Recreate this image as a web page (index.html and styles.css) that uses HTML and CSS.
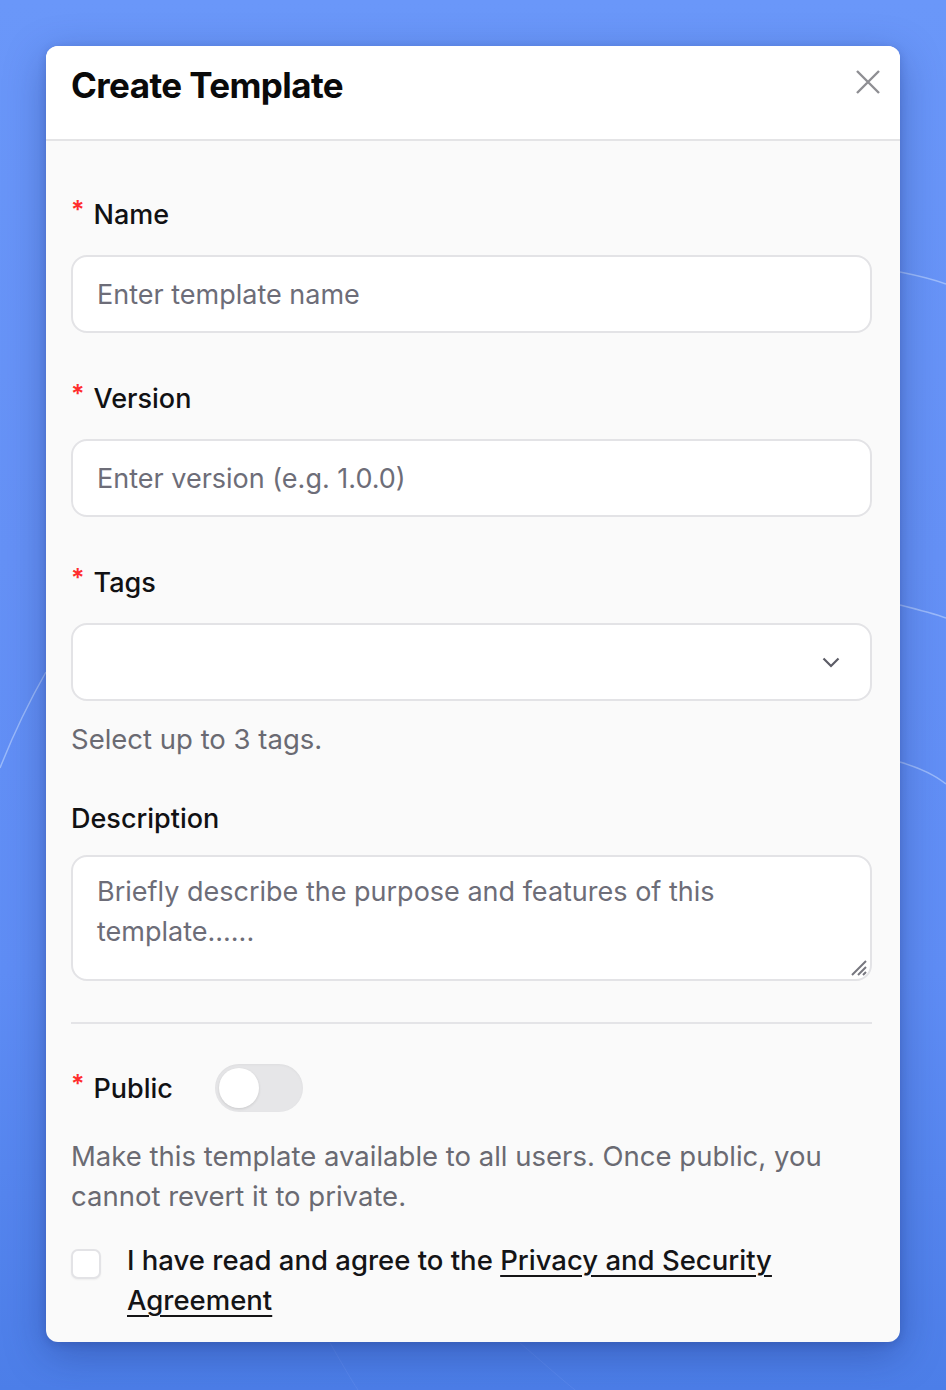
FILE: index.html
```html
<!DOCTYPE html>
<html lang="en">
<head>
<meta charset="utf-8">
<title>Create Template</title>
<link rel="stylesheet" href="styles.css">
</head>
<body>
<svg class="bg-lines" width="946" height="1390" viewBox="0 0 946 1390" aria-hidden="true">
  <path d="M0 768 C 15 730, 30 700, 46 672" />
  <path d="M900 272 C 920 276, 935 280, 946 284" />
  <path d="M900 605 C 920 610, 935 614, 946 618" />
  <path d="M900 762 C 920 768, 935 775, 946 784" />
  <path class="faint" d="M330 1343 C 340 1360, 350 1378, 358 1390" />
  <path class="faint" d="M520 1343 C 540 1360, 560 1378, 575 1390" />
</svg>
<div class="modal">
  <div class="modal-header">
    <h1 class="modal-title">Create Template</h1>
    <button class="close" aria-label="Close">
      <svg width="24" height="24" viewBox="0 0 24 24"><path d="M1 1 L23 23 M23 1 L1 23" /></svg>
    </button>
  </div>
  <div class="modal-body">
    <div class="item">
      <label class="label"><span class="req">*</span>Name</label>
      <div class="input"><span class="ph">Enter template name</span></div>
    </div>
    <div class="item">
      <label class="label"><span class="req">*</span>Version</label>
      <div class="input"><span class="ph">Enter version (e.g. 1.0.0)</span></div>
    </div>
    <div class="item item-tags">
      <label class="label"><span class="req">*</span>Tags</label>
      <div class="input select">
        <span class="ph"></span>
        <svg class="chev" width="18" height="11" viewBox="0 0 18 11"><path d="M1.5 1.5 L9 9 L16.5 1.5" /></svg>
      </div>
      <div class="help">Select up to 3 tags.</div>
    </div>
    <div class="item item-desc">
      <label class="label">Description</label>
      <div class="textarea">
        <div class="ph ph-block">Briefly describe the purpose and features of this template......</div>
        <svg class="grip" width="22" height="22" viewBox="0 0 22 22"><path d="M20 6 L6 20 M20 12 L12 20 M20 17 L17 20" /></svg>
      </div>
    </div>
    <div class="divider"></div>
    <div class="public-row">
      <label class="label"><span class="req">*</span>Public</label>
      <div class="switch"><div class="knob"></div></div>
    </div>
    <div class="help help-public">Make this template available to all users. Once public, you cannot revert it to private.</div>
    <div class="agree">
      <span class="checkbox"></span>
      <span class="agree-text">I have read and agree to the <a href="#">Privacy and Security Agreement</a></span>
    </div>
  </div>
</div>
</body>
</html>
```

FILE: styles.css
```css
* { box-sizing: border-box; }
html, body { margin: 0; padding: 0; }
body {
  width: 946px;
  height: 1390px;
  overflow: hidden;
  position: relative;
  font-family: "Inter", "Liberation Sans", sans-serif;
  background: linear-gradient(180deg, #6a97f9 0%, #6591f6 40%, #5f8df5 70%, #4c7ee8 100%);
  padding: 46px 46px 0 46px;
}
.bg-lines {
  position: absolute;
  left: 0;
  top: 0;
  pointer-events: none;
}
.bg-lines path {
  fill: none;
  stroke: rgba(200, 220, 255, 0.55);
  stroke-width: 1.5;
}
.bg-lines path.faint {
  stroke: rgba(110, 150, 240, 0.35);
  stroke-width: 1;
}
.modal {
  position: relative;
  width: 854px;
  background: #fafafa;
  border-radius: 12px;
  overflow: hidden;
  box-shadow: 0 12px 40px rgba(20, 40, 110, 0.35), 0 2px 8px rgba(20, 40, 110, 0.2);
}
.modal-header {
  height: 95px;
  background: #ffffff;
  border-bottom: 2px solid #e4e4e6;
  display: flex;
  align-items: flex-start;
  justify-content: space-between;
  padding: 0 20px 0 25px;
}
.modal-title {
  margin: 19px 0 0 0;
  font-size: 35px;
  line-height: 40px;
  font-weight: 700;
  color: #0a0a0a;
  letter-spacing: -0.6px;
}
.close {
  margin-top: 24px;
  border: 0;
  background: none;
  padding: 0;
  width: 24px;
  height: 24px;
}
.close svg path {
  stroke: #8e8e93;
  stroke-width: 2.4;
  fill: none;
}
.modal-body {
  padding: 51px 28px 22px 25px;
}
.item {
  margin-bottom: 43px;
}
.label {
  display: flex;
  align-items: center;
  height: 44px;
  font-size: 27px;
  font-weight: 500;
  color: #111113;
  margin-bottom: 19px;
}
.req {
  color: #ff2d2d;
  font-size: 25px;
  font-weight: 600;
  margin-right: 9px;
  position: relative;
  top: -4px;
}
.input {
  height: 78px;
  border: 2px solid #e3e3e6;
  background: #ffffff;
  border-radius: 16px;
  display: flex;
  align-items: center;
  padding: 0 24px;
}
.ph {
  font-size: 27px;
  color: #6d6d78;
}
.select {
  justify-content: space-between;
  padding-right: 30px;
}
.chev path {
  fill: none;
  stroke: #5c5c66;
  stroke-width: 2.2;
}
.item-tags { margin-bottom: 37px; }
.help {
  font-size: 27.5px;
  line-height: 40px;
  color: #6a6a72;
  margin-top: 18px;
}
.item-desc .label { margin-bottom: 15px; }
.item-desc { margin-bottom: 41px; }
.textarea {
  position: relative;
  height: 126px;
  border: 2px solid #e3e3e6;
  background: #ffffff;
  border-radius: 16px;
  padding: 15px 60px 0 24px;
  font-size: 27px;
  line-height: 40px;
}
.ph-block {
  display: block;
  line-height: 40px;
}
.grip {
  position: absolute;
  right: 2px;
  bottom: 2px;
}
.grip path {
  stroke: #77777f;
  stroke-width: 2;
  fill: none;
}
.divider {
  height: 2px;
  background: #e4e4e7;
  margin-bottom: 40px;
}
.public-row {
  display: flex;
  align-items: center;
  height: 48px;
}
.public-row .label {
  margin: 0;
  width: 144px;
}
.switch {
  width: 88px;
  height: 48px;
  border-radius: 24px;
  background: #e6e6e8;
  padding: 4px;
  box-shadow: inset 0 1px 3px rgba(0,0,0,0.04);
}
.knob {
  width: 40px;
  height: 40px;
  border-radius: 50%;
  background: #ffffff;
  box-shadow: 0 1px 3px rgba(0,0,0,0.12);
}
.help-public {
  margin-top: 24px;
}
.agree {
  display: flex;
  align-items: flex-start;
  margin-top: 24px;
}
.checkbox {
  flex: none;
  width: 30px;
  height: 30px;
  border: 2px solid #e3e3e6;
  border-radius: 7px;
  background: #ffffff;
  margin-top: 9px;
  margin-right: 26px;
  box-shadow: 0 1px 2px rgba(0,0,0,0.05);
}
.agree-text {
  font-size: 27.5px;
  line-height: 40px;
  font-weight: 500;
  color: #141416;
  max-width: 690px;
}
.agree-text a {
  color: #141416;
  text-decoration: underline;
  text-underline-offset: 5px;
  text-decoration-thickness: 2px;
}
```
